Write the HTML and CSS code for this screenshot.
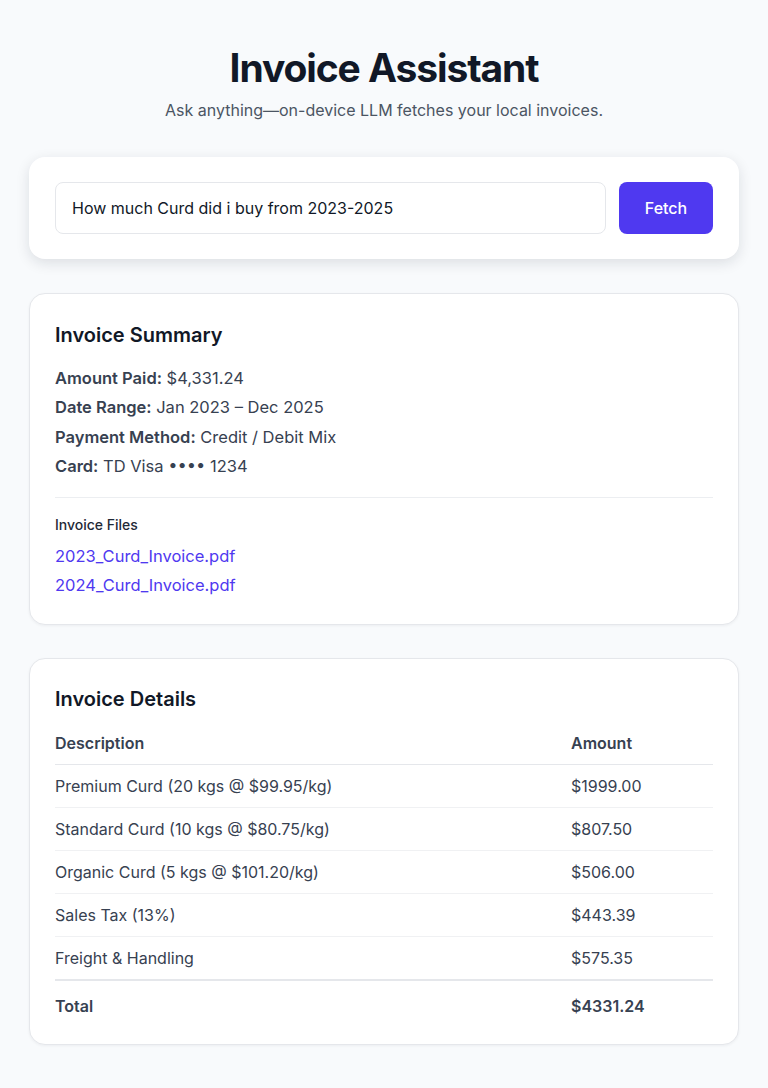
FILE: index.html
```html
<!DOCTYPE html>
<html lang="en">
<head>
<meta charset="utf-8">
<title>Invoice Assistant</title>
<link rel="stylesheet" href="styles.css">
</head>
<body>
<main class="page">
  <header class="hero">
    <h1 class="title">Invoice Assistant</h1>
    <p class="subtitle">Ask anything—on-device LLM fetches your local invoices.</p>
  </header>

  <section class="card search-card">
    <input class="search-input" type="text" value="How much Curd did i buy from 2023-2025">
    <button class="fetch-btn" type="button">Fetch</button>
  </section>

  <section class="card bordered summary-card">
    <h2 class="card-title">Invoice Summary</h2>
    <div class="facts">
      <p class="fact"><strong>Amount Paid:</strong> $4,331.24</p>
      <p class="fact"><strong>Date Range:</strong> Jan 2023 – Dec 2025</p>
      <p class="fact"><strong>Payment Method:</strong> Credit / Debit Mix</p>
      <p class="fact"><strong>Card:</strong> TD Visa •••• 1234</p>
    </div>
    <hr class="divider">
    <h3 class="files-title">Invoice Files</h3>
    <ul class="files">
      <li><a class="file-link" href="#">2023_Curd_Invoice.pdf</a></li>
      <li><a class="file-link" href="#">2024_Curd_Invoice.pdf</a></li>
    </ul>
  </section>

  <section class="card bordered details-card">
    <h2 class="card-title">Invoice Details</h2>
    <table class="items">
      <thead>
        <tr><th class="col-desc">Description</th><th class="col-amt">Amount</th></tr>
      </thead>
      <tbody>
        <tr><td>Premium Curd (20 kgs @ $99.95/kg)</td><td>$1999.00</td></tr>
        <tr><td>Standard Curd (10 kgs @ $80.75/kg)</td><td>$807.50</td></tr>
        <tr><td>Organic Curd (5 kgs @ $101.20/kg)</td><td>$506.00</td></tr>
        <tr><td>Sales Tax (13%)</td><td>$443.39</td></tr>
        <tr><td>Freight &amp; Handling</td><td>$575.35</td></tr>
      </tbody>
      <tfoot>
        <tr><td>Total</td><td>$4331.24</td></tr>
      </tfoot>
    </table>
  </section>
</main>
</body>
</html>
```

FILE: styles.css
```css
* { box-sizing: border-box; }

html, body {
  margin: 0;
  padding: 0;
  background: #f8fafc;
}

body {
  font-family: Inter, "Noto Sans", "Liberation Sans", sans-serif;
  color: #374151;
  font-size: 16px;
}

.page {
  width: 710px;
  margin: 0 auto;
  padding-top: 44px;
  padding-bottom: 40px;
  display: flex;
  flex-direction: column;
}

.hero {
  text-align: center;
  margin-bottom: 35px;
}

.title {
  margin: 0 0 6px;
  font-size: 39px;
  line-height: 48px;
  font-weight: 700;
  color: #111827;
  letter-spacing: -1.1px;
}

.subtitle {
  margin: 0;
  font-size: 16px;
  line-height: 24px;
  color: #4b5563;
}

.card {
  background: #ffffff;
  border-radius: 16px;
}

.search-card {
  display: flex;
  gap: 13px;
  padding: 25px 26px;
  box-shadow: 0 4px 14px rgba(15, 23, 42, 0.12);
  margin-bottom: 34px;
}

.search-input {
  flex: 1;
  height: 52px;
  border: 1px solid #e5e7eb;
  border-radius: 8px;
  padding: 0 16px;
  font-family: inherit;
  font-size: 16px;
  color: #111827;
  background: #fff;
  outline: none;
}

.fetch-btn {
  width: 94px;
  height: 52px;
  border: none;
  border-radius: 8px;
  background: #4f39f0;
  color: #ffffff;
  font-family: inherit;
  font-size: 16px;
  font-weight: 500;
}

.bordered {
  border: 1px solid #e5e7eb;
  padding: 24px 25px;
  box-shadow: 0 1px 3px rgba(15, 23, 42, 0.05);
}

.summary-card {
  margin-bottom: 33px;
}

.card-title {
  margin: 0;
  font-size: 20px;
  line-height: 32px;
  font-weight: 600;
  color: #111827;
}

.summary-card .card-title {
  margin-top: 1px;
}

.facts {
  margin-top: 13px;
  display: flex;
  flex-direction: column;
}

.fact {
  margin: 0;
  font-size: 16.5px;
  line-height: 29.4px;
}

.fact strong {
  font-weight: 600;
}

.divider {
  border: none;
  border-top: 1px solid #eceef1;
  margin: 15px 0 17px;
}

.files-title {
  margin: 0;
  font-size: 14px;
  line-height: 20px;
  font-weight: 500;
  color: #1f2937;
}

.files {
  list-style: none;
  margin: 7px 0 0;
  padding: 0;
}

.files li {
  font-size: 16.5px;
  line-height: 29px;
}

.file-link {
  color: #4f39f0;
  text-decoration: none;
}

.details-card {
  padding-bottom: 13px;
}

.items {
  width: 100%;
  margin-top: 7px;
  border-collapse: collapse;
}

.items th,
.items td {
  text-align: left;
  padding: 9px 0;
  line-height: 24px;
  font-size: 16px;
}

.items th {
  font-weight: 600;
  color: #374151;
  border-bottom: 1px solid #e5e7eb;
}

.col-desc { width: 516px; }

.items tbody td {
  border-bottom: 1px solid #f0f1f3;
}

.items tbody tr:last-child td {
  border-bottom: none;
}

.items tfoot td {
  padding: 13px 0;
  font-weight: 600;
  border-top: 2px solid #e5e7eb;
}
```
